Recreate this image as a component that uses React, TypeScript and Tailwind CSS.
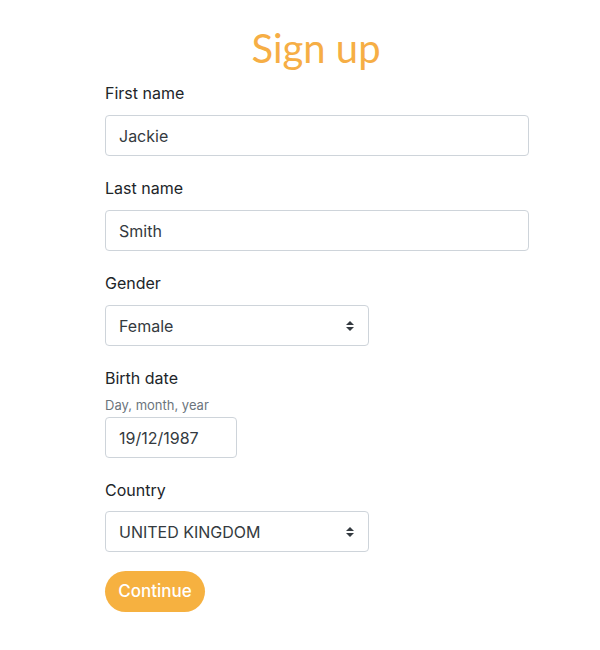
import React from "react";

const Arrows = () => (
  <svg width="8" height="11" viewBox="0 0 8 11" className="absolute right-[14px] top-1/2 -translate-y-1/2">
    <path d="M0 4.5 L4 0.5 L8 4.5 Z" fill="#343a40" />
    <path d="M0 6.5 L4 10.5 L8 6.5 Z" fill="#343a40" />
  </svg>
);

export default function App() {
  const font = { fontFamily: 'Inter, "Liberation Sans", Arial, sans-serif' };
  return (
    <div className="w-[600px] h-[650px] bg-white" style={font}>
      <div className="flex flex-col items-center pt-[26px]">
        <h1
          className="text-[40px] leading-[44px] text-[#f6ae45] font-normal ml-[32px]"
          style={{ fontFamily: 'Lato, "Noto Sans", sans-serif', fontWeight: 400 }}
        >
          Sign up
        </h1>
      </div>
      <div className="ml-[105px] w-[424px] flex flex-col pt-[11px] text-[#212529]">
        <label className="text-[16px] leading-[24px]">First name</label>
        <div className="mt-[10px] h-[41px] border border-[#ced4da] rounded-[4px] flex items-center px-[13px] text-[16px] text-[#343a40]">
          Jackie
        </div>
        <label className="mt-[20px] text-[16px] leading-[24px]">Last name</label>
        <div className="mt-[10px] h-[41px] border border-[#ced4da] rounded-[4px] flex items-center px-[13px] text-[16px] text-[#343a40]">
          Smith
        </div>
        <label className="mt-[20px] text-[16px] leading-[24px]">Gender</label>
        <div className="relative mt-[10px] w-[264px] h-[41px] border border-[#ced4da] rounded-[4px] flex items-center px-[13px] text-[16px] text-[#343a40]">
          Female
          <Arrows />
        </div>
        <label className="mt-[20px] text-[16px] leading-[24px]">Birth date</label>
        <div className="mt-[7px] text-[13px] leading-[16px] text-[#6c757d]">Day, month, year</div>
        <div className="mt-[4px] w-[132px] h-[41px] border border-[#ced4da] rounded-[4px] flex items-center px-[13px] text-[16px] text-[#343a40]">
          19/12/1987
        </div>
        <label className="mt-[20px] text-[16px] leading-[24px]">Country</label>
        <div className="relative mt-[9px] w-[264px] h-[41px] border border-[#ced4da] rounded-[4px] flex items-center px-[13px] text-[16px] text-[#343a40]">
          UNITED KINGDOM
          <Arrows />
        </div>
        <div className="mt-[19px]">
          <button className="h-[41px] w-[100px] rounded-full bg-[#f6b140] text-white text-[17px] font-medium">
            Continue
          </button>
        </div>
      </div>
    </div>
  );
}
